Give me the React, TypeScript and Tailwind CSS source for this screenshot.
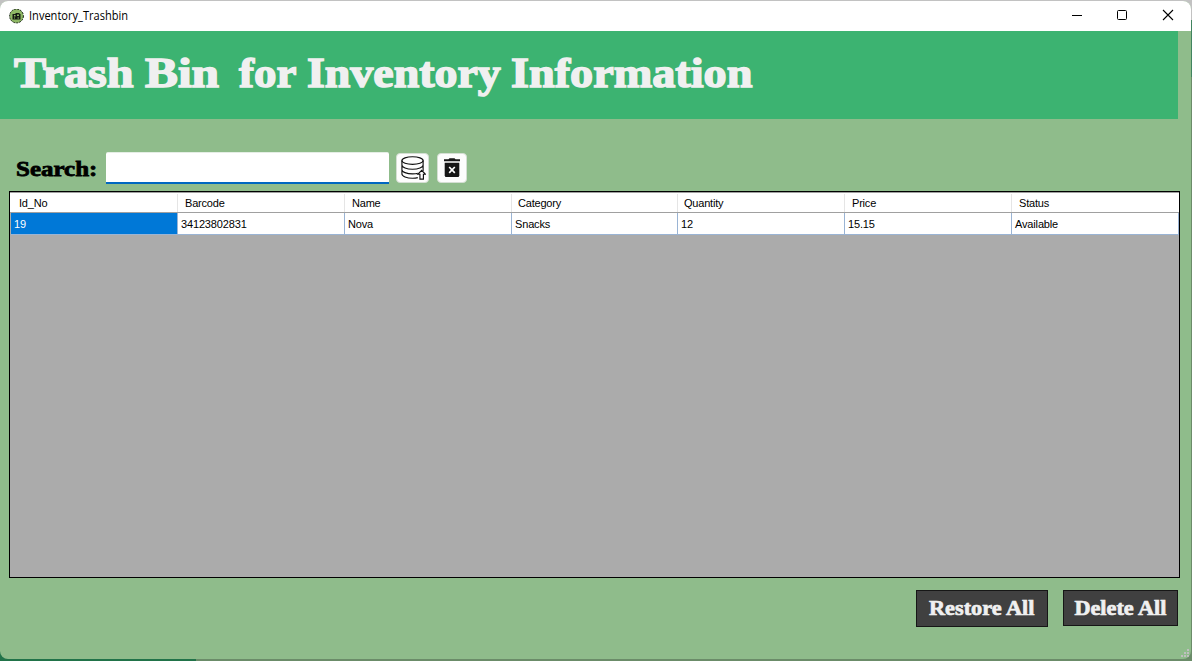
import type { ReactNode } from "react";

const columns = [
  { name: "Id_No", value: "19", inset: "pl-[8px]" },
  { name: "Barcode", value: "34123802831", inset: "pl-[7px]" },
  { name: "Name", value: "Nova", inset: "pl-[7px]" },
  { name: "Category", value: "Snacks", inset: "pl-[6px]" },
  { name: "Quantity", value: "12", inset: "pl-[6px]" },
  { name: "Price", value: "15.15", inset: "pl-[7px]" },
  { name: "Status", value: "Available", inset: "pl-[7px]" },
];

const titleWords = [
  { text: "Trash ", slot: "w-[131px]", scale: "scale-x-[1.119]" },
  { text: "Bin  ", slot: "w-[94px]", scale: "scale-x-[1.147]" },
  { text: "for ", slot: "w-[68px]", scale: "scale-x-[1.045]" },
  { text: "Inventory ", slot: "w-[204px]", scale: "scale-x-[1.067]" },
  { text: "Information", slot: "w-[241px]", scale: "scale-x-[1.075]" },
];

const gridColumns = "grid grid-cols-[167px_167px_167px_166px_167px_167px_167px]";

function AppIcon() {
  return (
    <svg width="15" height="15" viewBox="0 0 15 15">
      <circle cx="7.5" cy="7" r="6.9" fill="#8fb865" stroke="#172414" strokeWidth="1" strokeDasharray="2 1" />
      <path d="M3.500 5h3V4h4v1h1v5.500h-8z" fill="#151a12" />
      <path d="M5 6h1.500v1.500H5zM8 5.500h2V7H8zM5 8.500h1v1H5zM8.500 8.500h1.500v1H8.500z" fill="#8fb865" />
    </svg>
  );
}

function TitleBar() {
  return (
    <header className="flex h-[30px] shrink-0 items-center bg-white pl-[9px] font-['Open_Sans','Noto_Sans',sans-serif] text-[12px] text-black">
      <AppIcon />
      <span className="ml-[5px] origin-left scale-x-[0.922] whitespace-nowrap">Inventory_Trashbin</span>
      <svg className="ml-auto" width="124" height="30" viewBox="0 0 124 30" fill="none" stroke="#000">
        <path d="M5 14.5h10" />
        <rect x="50.5" y="9.5" width="9" height="9" rx="1" />
        <path d="M96 9l10 10M106 9l-10 10" strokeWidth="1.1" />
      </svg>
    </header>
  );
}

function PageTitle() {
  return (
    <h1 className="flex font-['Liberation_Serif',serif] text-[43px] leading-[50px] font-bold whitespace-pre text-[#f0f0f0] [-webkit-text-stroke:1.5px_#f0f0f0]">
      {titleWords.map((word) => (
        <span key={word.text} className={word.slot}>
          <span className={`inline-block origin-left ${word.scale}`}>{word.text}</span>
        </span>
      ))}
    </h1>
  );
}

function SearchBar() {
  return (
    <div className="flex h-[32px] items-start pl-[16px]">
      <label htmlFor="search" className="w-[90px] pt-[5px] font-['Liberation_Serif',serif] text-[22px] leading-[24px] font-bold text-black">
        <span className="inline-block origin-left scale-x-[1.135] whitespace-nowrap [-webkit-text-stroke:0.8px_#000]">Search:</span>
      </label>
      <input id="search" className="h-[32px] w-[283px] rounded-t-[2px] border-t border-b-2 border-t-[#e5eee5] border-b-[#0067c0] bg-white outline-none" />
      <button className="mt-px ml-[7px] flex h-[30px] w-[33px] items-center justify-center rounded-[4px] border border-[#d5dfd4] bg-[#fdfdfd]">
        <svg className="ml-px" width="26" height="26" viewBox="0 0 27 26" fill="none" stroke="#111" strokeWidth="1.2">
          <ellipse cx="13" cy="5.3" rx="11" ry="4" />
          <path d="M2 5.3v14c0 2.2 5 4.3 11 4.3 2 0 4-.2 5.5-.6M24 5.3V16M2 10c0 2.3 5 4.3 11 4.3S24 12.300 24 10M2 14.800c0 2.300 5 4.300 11 4.300 2 0 4-.2 5.500-.7" />
          <path d="M22.500 15.500l-4 4h2.200v5h3.600v-5h2.200z" fill="#fff" />
        </svg>
      </button>
      <button className="mt-px ml-[8px] flex h-[30px] w-[30px] items-center justify-center rounded-[4px] border border-[#d5dfd4] bg-[#fdfdfd]">
        <svg width="18" height="20" viewBox="0 0 18 20" fill="#161616">
          <path d="M1 1.300h4.500L6.500.2h5L12.500 1.300H17V3.300H1z" />
          <path d="M1.700 4.700h14.600v12.800a1.500 1.500 0 0 1-1.500 1.500H3.200a1.500 1.500 0 0 1-1.500-1.500z" />
          <path d="M6.200 9l5.600 5.800M11.800 9l-5.600 5.800" stroke="#fff" strokeWidth="1.700" />
        </svg>
      </button>
    </div>
  );
}

function InventoryGrid() {
  return (
    <div className="mt-[7px] ml-[9px] h-[387px] w-[1171px] border border-black bg-[#ababab] font-['Liberation_Sans',Arial,sans-serif] text-[11px] text-black">
      <div className={`${gridColumns} h-[21px] border-t border-b border-t-[#a0a0a0] border-b-[#a0a0a0] bg-white pl-px tracking-[-0.2px]`}>
        {columns.map((column) => (
          <div key={column.name} className={`mt-px border-r border-[#e5e5e5] leading-[18px] last:border-r-0 ${column.inset}`}>
            {column.name}
          </div>
        ))}
      </div>
      <div className={`${gridColumns} h-[22px] pl-px tracking-[-0.15px]`}>
        {columns.map((column) => (
          <div
            key={column.name}
            className="h-[22px] border-r border-b border-[#9ab4d4] bg-white pl-[3px] leading-[23px] first:bg-[#0078d7] first:text-white"
          >
            {column.value}
          </div>
        ))}
      </div>
    </div>
  );
}

function ActionButton({ className, children }: { className: string; children: ReactNode }) {
  return (
    <button className={`flex items-center justify-center border border-[#161616] bg-[#404040] font-['Liberation_Serif',serif] text-[21px] leading-none font-bold text-[#f0f0f0] ${className}`}>
      <span className="scale-x-[1.06] whitespace-nowrap [-webkit-text-stroke:0.7px_#f0f0f0]">{children}</span>
    </button>
  );
}

function ResizeGrip() {
  return (
    <svg className="absolute right-[2px] bottom-[2px]" width="8" height="8" fill="#bfbfbf">
      <path d="M6 0h2v2H6zM3 3h2v2H3zM6 3h2v2H6zM0 6h2v2H0zM3 6h2v2H3zM6 6h2v2H6z" />
    </svg>
  );
}

export default function App() {
  return (
    <div className="h-[661px] w-[1192px] overflow-hidden bg-[linear-gradient(90deg,#217349_196px,#6b8c69_196px)]">
      <div className="h-[659px] bg-[linear-gradient(180deg,#c2c2c2_20px,#418460_20px,#418460_77px,transparent_77px)] pt-px">
        <div className="relative flex h-[658px] w-[1191px] flex-col overflow-hidden rounded-[8px] bg-[#8fbc8b]">
          <TitleBar />
          <div className="h-[88px] w-[1178px] shrink-0 bg-[#3cb371] pt-[17px] pl-[14px]">
            <PageTitle />
          </div>
          <main className="pt-[33px]">
            <SearchBar />
            <InventoryGrid />
            <div className="mt-[12px] flex items-start justify-end gap-[15px] pr-[13px]">
              <ActionButton className="h-[37px] w-[132px]">Restore All</ActionButton>
              <ActionButton className="h-[36px] w-[115px]">Delete All</ActionButton>
            </div>
          </main>
          <ResizeGrip />
        </div>
      </div>
    </div>
  );
}
